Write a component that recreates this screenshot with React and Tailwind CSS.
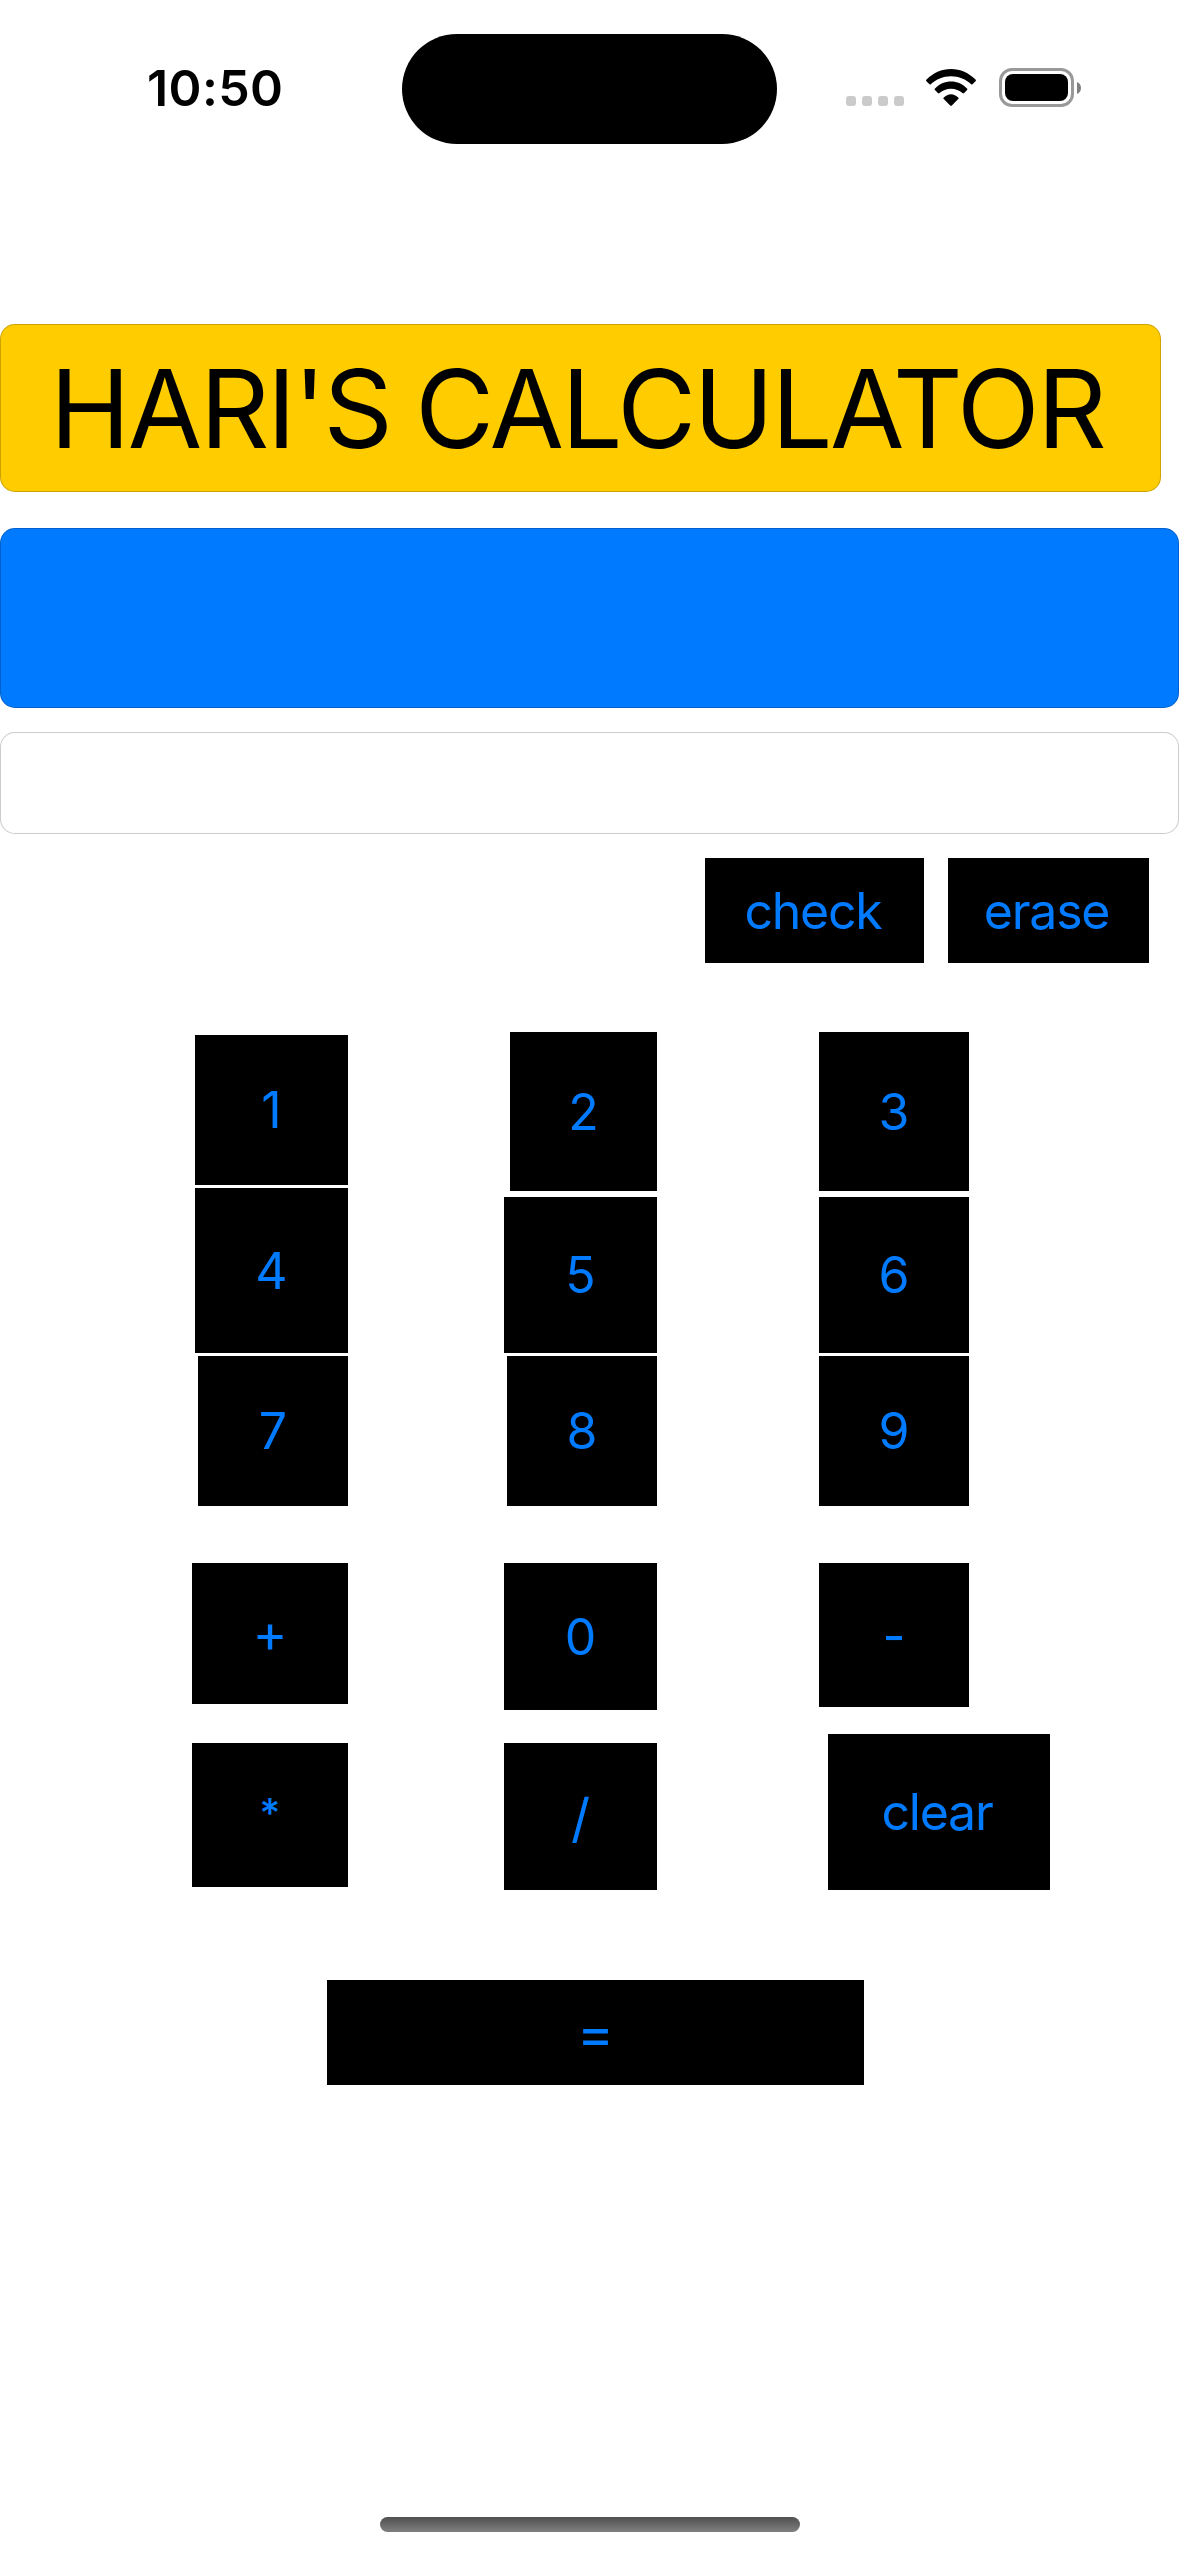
const columns = [
  {
    className: "flex w-[156px] flex-col items-end pt-[3px]",
    keys: [
      { label: "1", box: "w-[153px] h-[150px]" },
      { label: "4", box: "w-[153px] h-[165px] mt-[3px]" },
      { label: "7", box: "w-[150px] h-[150px] mt-[3px]" },
      { label: "+", box: "w-[156px] h-[141px] mt-[57px]", text: "text-[53px]" },
      { label: "*", box: "w-[156px] h-[144px] mt-[39px]", text: "text-[40px] font-medium pb-[5px]" },
    ],
  },
  {
    className: "ml-[156px] flex w-[153px] flex-col items-end",
    keys: [
      { label: "2", box: "w-[147px] h-[159px]" },
      { label: "5", box: "w-[153px] h-[156px] mt-[6px]" },
      { label: "8", box: "w-[150px] h-[150px] mt-[3px]" },
      { label: "0", box: "w-[153px] h-[147px] mt-[57px]" },
      { label: "/", box: "w-[153px] h-[147px] mt-[33px]", text: "text-[53px] pt-[3px]" },
    ],
  },
  {
    className: "ml-[162px] flex w-[231px] flex-col items-start",
    keys: [
      { label: "3", box: "w-[150px] h-[159px]" },
      { label: "6", box: "w-[150px] h-[156px] mt-[6px]" },
      { label: "9", box: "w-[150px] h-[150px] mt-[3px]" },
      { label: "-", box: "w-[150px] h-[144px] mt-[57px]", text: "text-[50px] pt-[2px]" },
      { label: "clear", box: "w-[222px] h-[156px] mt-[27px] ml-[9px]", text: "text-[50px] tracking-[-1.2px] pr-[4px]" },
    ],
  },
];

function Key({ label, box, text = "text-[50px]" }) {
  return (
    <button className={`flex shrink-0 items-center justify-center bg-black leading-none text-[#007aff] ${box}`}>
      <span className={text}>{label}</span>
    </button>
  );
}

function StatusBar() {
  return (
    <header className="flex h-[144px] shrink-0 items-start">
      <time className="mt-[63px] ml-[147px] w-[255px] text-[50px] leading-[50px] font-semibold tracking-[0.4px] text-black">
        10:50
      </time>
      <div className="mt-[34px] h-[110px] w-[375px] rounded-full bg-black" />
      <div className="mt-[96px] ml-[69px] flex gap-[6px]">
        <i className="size-[10px] rounded-[3px] bg-[#cbcbcb]" />
        <i className="size-[10px] rounded-[3px] bg-[#cbcbcb]" />
        <i className="size-[10px] rounded-[3px] bg-[#cbcbcb]" />
        <i className="size-[10px] rounded-[3px] bg-[#cbcbcb]" />
      </div>
      <svg className="mt-[69px] ml-[22px] h-[37px] w-[50px]" viewBox="0 0 50 37" fill="black">
        <path d="M25 7.2C33 7.2 40 10.2 45.2 15.2Q46 15.9 46.8 15.1L49.5 12.3Q50.3 11.4 49.5 10.6C43 4 34.3 0 25 0S7 4 .5 10.6Q-.3 11.4 .5 12.3L3.2 15.1Q4 15.9 4.8 15.2C10 10.2 17 7.2 25 7.2Z" />
        <path d="M25 19.7C29.4 19.7 33.4 21.3 36.5 24.1Q37.3 24.9 38.1 24.1L41.1 21.1Q41.9 20.2 41 19.4C36.7 15.2 31.2 12.5 25 12.5S13.3 15.2 9 19.4Q8.1 20.2 8.9 21.1L11.9 24.1Q12.7 24.9 13.5 24.1C16.6 21.3 20.6 19.7 25 19.7Z" />
        <path d="M32.2 28.5Q33.1 29.3 32.2 30.1L25.8 36.5Q25 37.3 24.2 36.5L17.8 30.1Q16.9 29.3 17.8 28.5C19.8 26.5 22.3 25.2 25 25.2S30.2 26.5 32.2 28.5Z" />
      </svg>
      <div className="mt-[68px] ml-[23px] flex items-center gap-[3px]">
        <div className="h-[39px] w-[75px] rounded-[13px] border-[3px] border-[#999] p-[3px]">
          <div className="h-full w-full rounded-[8px] bg-black" />
        </div>
        <svg className="h-[12px] w-[4px]" viewBox="0 0 4 12" fill="#808080">
          <path d="M0 0C2.5 1 4 3.3 4 6S2.5 11 0 12Z" />
        </svg>
      </div>
    </header>
  );
}

export default function App() {
  return (
    <main className="flex h-[2556px] w-[1179px] flex-col overflow-hidden bg-white font-['Inter',sans-serif]">
      <StatusBar />

      <h1 className="mt-[180px] flex h-[168px] w-[1161px] shrink-0 items-center rounded-[15px] border border-black/20 bg-[#ffcc00] pt-[2px] pl-[49px] text-[108px] leading-none tracking-[-2.45px] whitespace-nowrap text-black [word-spacing:-3px]">
        HARI'S CALCULATOR
      </h1>
      <div className="mt-[36px] h-[180px] shrink-0 rounded-[15px] border border-black/20 bg-[#007aff]" />
      <div className="mt-[24px] h-[102px] shrink-0 rounded-[15px] border border-black/20 bg-white" />

      <div className="mt-[24px] mr-[30px] flex shrink-0 justify-end gap-[24px]">
        <Key label="check" box="w-[219px] h-[105px]" text="text-[50px] tracking-[-1.3px] pr-[3px]" />
        <Key label="erase" box="w-[201px] h-[105px]" text="text-[50px] tracking-[-1.2px] pr-[4px]" />
      </div>

      <section className="mt-[69px] ml-[192px] flex shrink-0 items-start">
        {columns.map((column) => (
          <div key={column.keys[0].label} className={column.className}>
            {column.keys.map((key) => (
              <Key key={key.label} {...key} />
            ))}
          </div>
        ))}
      </section>

      <div className="mt-[90px] ml-[327px] flex shrink-0">
        <Key label="=" box="w-[537px] h-[105px]" text="text-[56px]" />
      </div>

      <div className="mt-auto mb-[24px] h-[15px] w-[420px] shrink-0 self-center rounded-full bg-linear-to-b from-[#505050] to-[#808080]" />
    </main>
  );
}
